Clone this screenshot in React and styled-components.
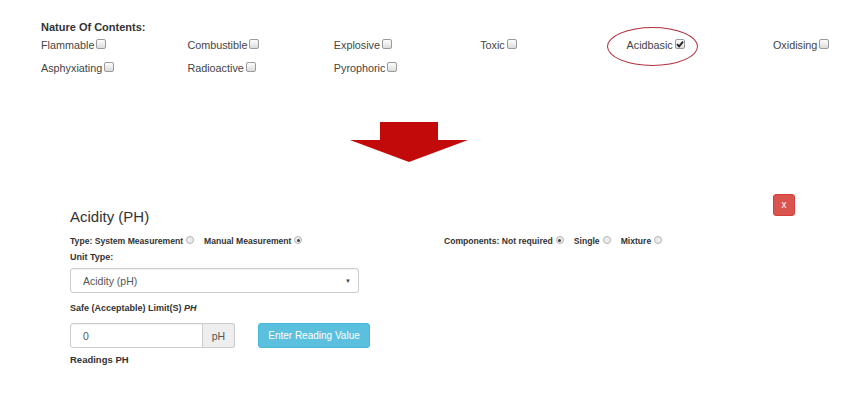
import React from "react";
import styled, { createGlobalStyle } from "styled-components";

const Global = createGlobalStyle`
  html, body { margin: 0; padding: 0; background: #fff; }
  body { font-family: "Liberation Sans", Arial, sans-serif; color: #333; }
`;

const Page = styled.div`
  width: 868px;
  height: 398px;
  overflow: hidden;
`;

const Nature = styled.section`
  padding: 20px 0 0 41px;
`;

const Heading = styled.div`
  font-size: 11px;
  font-weight: bold;
  line-height: 14px;
  color: #333;
`;

const Grid = styled.div`
  display: grid;
  grid-template-columns: repeat(6, 146.4px);
  row-gap: 9px;
  margin-top: 4px;
`;

const Item = styled.label`
  position: relative;
  display: flex;
  align-items: center;
  gap: 2px;
  font-size: 10.8px;
  line-height: 14px;
  color: #444;
  white-space: nowrap;
`;

const Box = styled.span`
  box-sizing: border-box;
  width: 10px;
  height: 10px;
  border: 1px solid #9a9a9a;
  border-radius: 2px;
  background: linear-gradient(#fdfdfd, #dcdcdc);
  display: inline-flex;
  align-items: center;
  justify-content: center;
  margin-top: -2px;
`;

const Ring = styled.span`
  position: absolute;
  left: -20px;
  top: -11px;
  width: 91px;
  height: 39px;
  box-sizing: border-box;
  border: 1.2px solid #b3323e;
  border-radius: 50%;
  pointer-events: none;
`;

const ArrowWrap = styled.div`
  margin: 47px 0 0 349px;
  width: 120px;
  height: 41px;
  svg { display: block; }
`;

const Panel = styled.section`
  margin: 31px 0 0 70px;
  width: 725px;
`;

const Header = styled.div`
  display: flex;
  justify-content: space-between;
  align-items: flex-start;
`;

const Title = styled.h3`
  margin: 14px 0 0;
  font-size: 15px;
  line-height: 18px;
  font-weight: normal;
  color: #333;
`;

const CloseBtn = styled.button`
  width: 22px;
  height: 22px;
  padding: 0;
  border: 1px solid #d43f3a;
  border-radius: 3px;
  background: #d9534f;
  color: #fff;
  font-family: inherit;
  font-size: 10px;
  line-height: 20px;
  text-align: center;
`;

const TypeRow = styled.div`
  display: flex;
  margin-top: 9px;
  font-size: 8.6px;
  font-weight: bold;
  line-height: 12px;
  color: #333;
`;

const Group = styled.div`
  display: flex;
  align-items: center;
  width: ${(p) => p.$w || "auto"};
`;

const Opt = styled.span`
  display: flex;
  align-items: center;
  gap: 3px;
  margin-right: ${(p) => p.$mr || "10px"};
  white-space: nowrap;
`;

const Radio = styled.span`
  box-sizing: border-box;
  width: 8px;
  height: 8px;
  border-radius: 50%;
  border: 1px solid #b5b5b5;
  background: #ececec;
  display: inline-flex;
  align-items: center;
  justify-content: center;
  margin-top: -2px;
  &::after {
    content: "";
    width: 3px;
    height: 3px;
    border-radius: 50%;
    background: ${(p) => (p.$on ? "#444" : "transparent")};
  }
`;

const Label = styled.div`
  margin-top: ${(p) => p.$mt || "4px"};
  font-size: ${(p) => p.$fs || "9px"};
  font-weight: bold;
  line-height: 12px;
  color: #333;
  em { font-style: italic; }
`;

const Select = styled.div`
  box-sizing: border-box;
  margin-top: 5px;
  width: 289px;
  height: 25px;
  border: 1px solid #ccc;
  border-radius: 3px;
  box-shadow: inset 0 1px 1px rgba(0, 0, 0, 0.06);
  display: flex;
  align-items: center;
  justify-content: space-between;
  padding: 0 7px 0 12px;
  font-size: 10.5px;
  color: #555;
`;

const Caret = styled.span`
  font-size: 6px;
  color: #444;
`;

const InputRow = styled.div`
  display: flex;
  margin-top: 9px;
  height: 25px;
`;

const Input = styled.div`
  box-sizing: border-box;
  width: 133px;
  height: 25px;
  border: 1px solid #ccc;
  border-radius: 3px 0 0 3px;
  box-shadow: inset 0 1px 1px rgba(0, 0, 0, 0.06);
  padding-left: 12px;
  display: flex;
  align-items: center;
  font-size: 10.5px;
  color: #555;
`;

const Addon = styled.div`
  box-sizing: border-box;
  width: 32px;
  height: 25px;
  border: 1px solid #ccc;
  border-left: none;
  border-radius: 0 3px 3px 0;
  background: #eee;
  display: flex;
  align-items: center;
  justify-content: center;
  font-size: 10.5px;
  color: #555;
`;

const InfoBtn = styled.button`
  box-sizing: border-box;
  margin-left: 23px;
  width: 112px;
  height: 25px;
  padding: 0;
  border: 1px solid #46b8da;
  border-radius: 3px;
  background: #5bc0de;
  color: #fff;
  font-family: inherit;
  font-size: 10px;
`;

const Check = () => (
  <svg width="8" height="8" viewBox="0 0 8 8">
    <path d="M1 4.2 L3.1 6.3 L7 1.6" fill="none" stroke="#222" strokeWidth="1.8" />
  </svg>
);

const items = [
  ["Flammable"], ["Combustible"], ["Explosive"], ["Toxic"], ["Acidbasic", true], ["Oxidising"],
  ["Asphyxiating"], ["Radioactive"], ["Pyrophoric"],
];

export default function App() {
  return (
    <Page>
      <Global />
      <Nature>
        <Heading>Nature Of Contents:</Heading>
        <Grid>
          {items.map(([name, on]) => (
            <Item key={name}>
              {name}
              <Box>{on && <Check />}</Box>
              {on && <Ring />}
            </Item>
          ))}
        </Grid>
      </Nature>

      <ArrowWrap>
        <svg width="120" height="41" viewBox="0 0 120 41">
          <polygon points="31,0 89,0 89,18 119,18 60,40 1,18 31,18" fill="#c30a0a" />
        </svg>
      </ArrowWrap>

      <Panel>
        <Header>
          <Title>Acidity (PH)</Title>
          <CloseBtn>x</CloseBtn>
        </Header>
        <TypeRow>
          <Group $w="374px">
            <Opt>Type: System Measurement <Radio /></Opt>
            <Opt>Manual Measurement <Radio $on /></Opt>
          </Group>
          <Group>
            <Opt>Components: Not required <Radio $on /></Opt>
            <Opt>Single <Radio /></Opt>
            <Opt>Mixture <Radio /></Opt>
          </Group>
        </TypeRow>
        <Label>Unit Type:</Label>
        <Select>
          <span>Acidity (pH)</span>
          <Caret>▼</Caret>
        </Select>
        <Label $mt="9px">Safe (Acceptable) Limit(S) <em>PH</em></Label>
        <InputRow>
          <Input>0</Input>
          <Addon>pH</Addon>
          <InfoBtn>Enter Reading Value</InfoBtn>
        </InputRow>
        <Label $mt="6px" $fs="9.5px">Readings PH</Label>
      </Panel>
    </Page>
  );
}
